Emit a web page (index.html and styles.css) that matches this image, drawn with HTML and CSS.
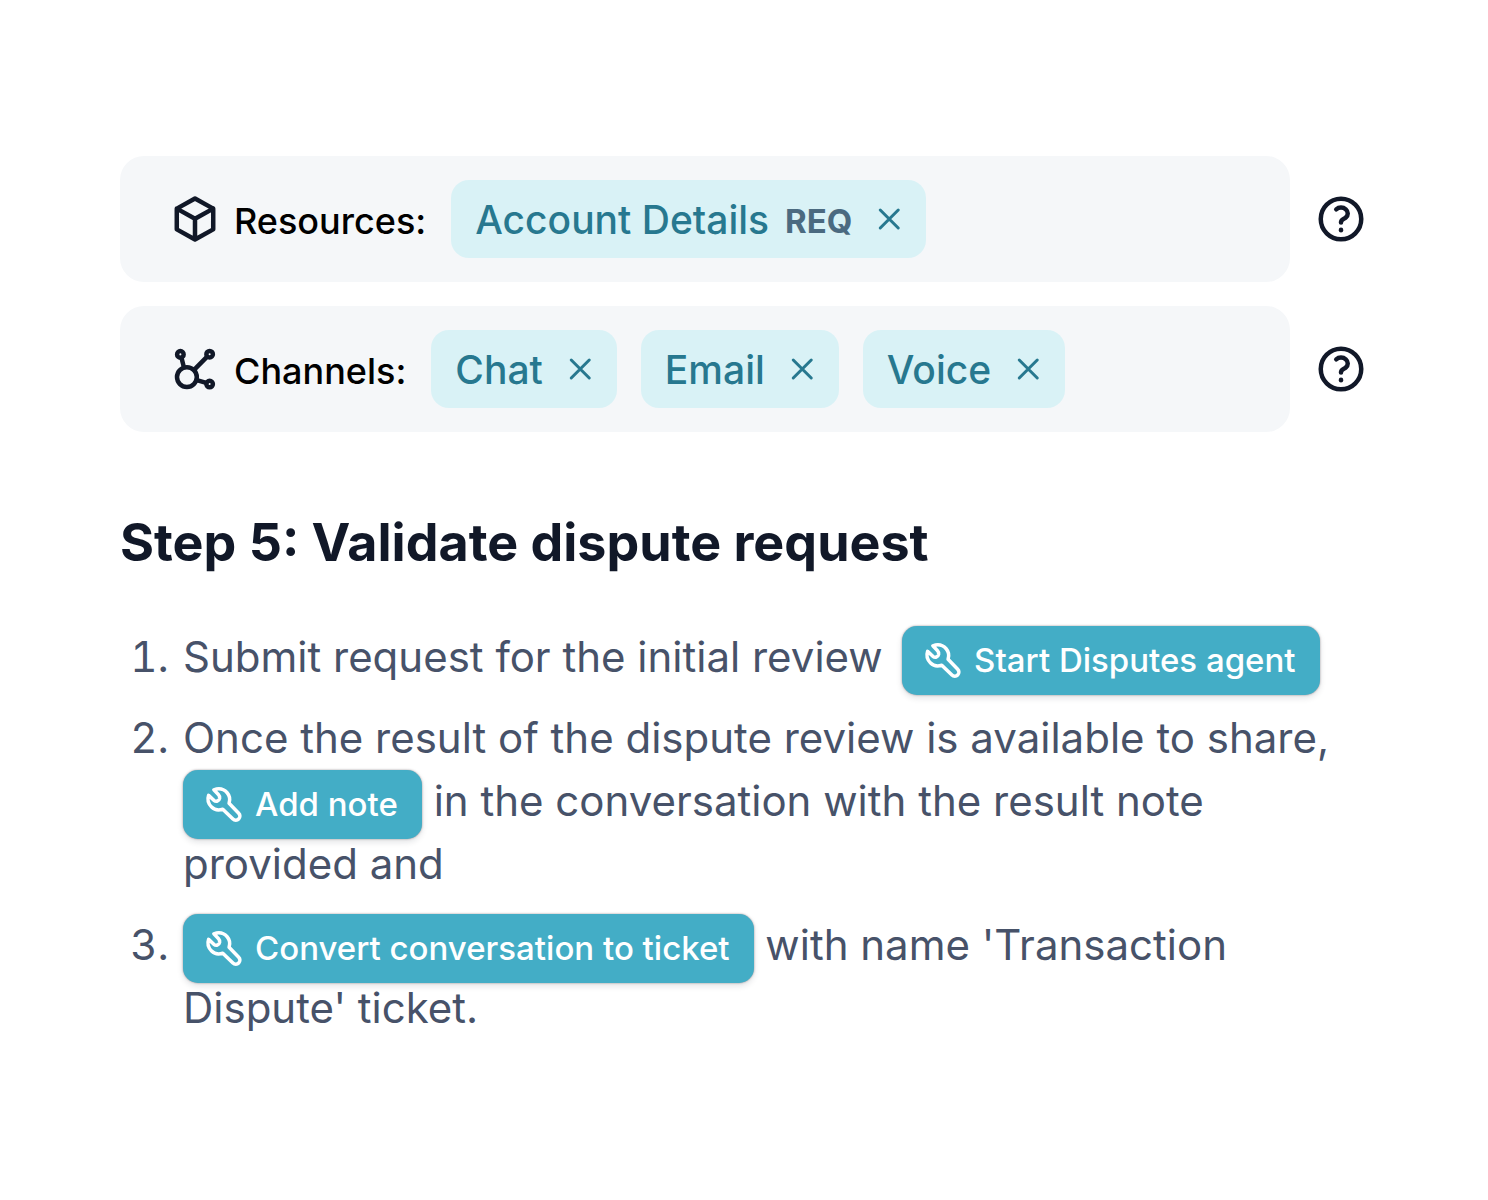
FILE: index.html
```html
<!DOCTYPE html>
<html lang="en">
<head>
<meta charset="utf-8">
<meta name="viewport" content="width=device-width, initial-scale=1">
<title>Validate dispute request</title>
<link rel="stylesheet" href="styles.css">
</head>
<body>
<svg class="sprite" aria-hidden="true">
  <symbol id="close" viewBox="0 0 24 24"><path d="M5.500 6l12 12M17.500 6l-12 12"/></symbol>
  <symbol id="help" viewBox="0 0 24 24"><circle cx="12" cy="12" r="9"/><path d="M9.880 7.700c1.171-1.025 3.071-1.025 4.242 0 1.172 1.025 1.172 2.600 0 3.600-.203.179-.43.326-.67.442-.745.361-1.450.9-1.450 1.750v.1"/><path d="M12 16.800v.2"/></symbol>
  <symbol id="wrench" viewBox="0 0 24 24"><path d="M6.200 3.300C9 2.300 12 3 13.800 5c1.400 1.600 1.800 3.800 1.100 6l5.500 5.700a2.330 2.330 0 0 1-3.300 3.300l-5.800-5.600c-2.400.8-4.700.5-6.400-1.200C3 11.300 2.400 8.900 3.200 6.500l3 2.800c1.300 1 3 .5 3.300-1 .1-.8-.1-1.700-.6-2.200z"/></symbol>
</svg>
<main class="page">
  <section class="fields">
    <div class="field">
      <div class="bar">
        <div class="label">
          <svg class="icon" viewBox="0 0 24 24" aria-hidden="true"><path d="M12 2.900l8.100 4.500v9.200L12 21.100l-8.100-4.500V7.400zM3.900 7.400l8.100 4.500 8.100-4.500M12 11.900v9.200"/></svg>
          <span class="label-text">Resources:</span>
        </div>
        <ul class="chips">
          <li class="chip">Account Details <strong class="req">REQ</strong><button class="remove" aria-label="Remove Account Details"><svg><use href="#close"/></svg></button></li>
        </ul>
      </div>
      <button class="help" aria-label="Help with resources"><svg class="icon"><use href="#help"/></svg></button>
    </div>
    <div class="field">
      <div class="bar">
        <div class="label">
          <svg class="icon" viewBox="0 0 24 24" aria-hidden="true"><circle cx="8.400" cy="15.600" r="4.400"/><circle cx="5.500" cy="5.500" r="1.450"/><circle cx="18.500" cy="5.400" r="1.450"/><circle cx="18.500" cy="18.700" r="1.450"/><path d="M6 7l1 4M17.400 6.500l-5.800 5.900M12.800 16.900l4.200 1.300"/></svg>
          <span class="label-text">Channels:</span>
        </div>
        <ul class="chips">
          <li class="chip">Chat<button class="remove" aria-label="Remove Chat"><svg><use href="#close"/></svg></button></li>
          <li class="chip">Email<button class="remove" aria-label="Remove Email"><svg><use href="#close"/></svg></button></li>
          <li class="chip">Voice<button class="remove" aria-label="Remove Voice"><svg><use href="#close"/></svg></button></li>
        </ul>
      </div>
      <button class="help" aria-label="Help with channels"><svg class="icon"><use href="#help"/></svg></button>
    </div>
  </section>
  <h1 class="title">Step 5: Validate dispute request</h1>
  <ol class="steps">
    <li>Submit request for the initial review&thinsp; <button class="action"><svg><use href="#wrench"/></svg>Start Disputes agent</button></li>
    <li>Once the result of the dispute review is available to share, <button class="action"><svg><use href="#wrench"/></svg>Add note</button> in the conversation with the result note provided and</li>
    <li><button class="action"><svg><use href="#wrench"/></svg>Convert conversation to ticket</button> with name 'Transaction Dispute' ticket.</li>
  </ol>
</main>
</body>
</html>
```
FILE: styles.css
```css
* {
  box-sizing: border-box;
}

body {
  margin: 0;
  background: #fff;
  color: #475269;
  font-family: Inter, "Liberation Sans", sans-serif;
}

button {
  border: 0;
  padding: 0;
  background: none;
  color: inherit;
  font: inherit;
  cursor: pointer;
}

svg {
  fill: none;
  stroke: currentColor;
  stroke-linecap: round;
  stroke-linejoin: round;
}

.sprite {
  display: none;
}

.page {
  padding: 156px 120px;
}

.fields {
  display: flex;
  flex-direction: column;
  gap: 24px;
}

.field {
  display: flex;
  align-items: center;
  gap: 24px;
}

.bar {
  flex: 1;
  display: flex;
  flex-wrap: wrap;
  align-items: center;
  gap: 25px;
  padding: 24px 48px;
  border-radius: 24px;
  background: #f5f7f9;
}

.label {
  display: flex;
  align-items: center;
  gap: 12px;
  color: #000;
  font-size: 36px;
  font-weight: 500;
}

.label-text,
.req {
  padding-top: 4px;
}

.icon {
  display: block;
  width: 54px;
  height: 54px;
  color: #111828;
  stroke-width: 2;
}

.chips {
  display: flex;
  flex-wrap: wrap;
  gap: 24px;
  margin: 0;
  padding: 0;
  list-style: none;
}

.chip {
  display: flex;
  align-items: center;
  gap: 16px;
  height: 78px;
  padding: 0 18px 0 24px;
  border-radius: 18px;
  background: #d9f2f6;
  color: #27788f;
  font-size: 39px;
  font-weight: 500;
}

.req {
  color: #4b6a80;
  font-size: 33px;
  font-weight: 700;
}

.remove {
  margin-left: 4px;
}

.remove svg {
  display: block;
  width: 36px;
  height: 36px;
  stroke-width: 2;
}

.title {
  margin: 78px 0 49px;
  color: #111828;
  font-size: 52px;
  font-weight: 700;
  line-height: 66px;
}

.steps {
  margin: 0;
  padding-left: 60px;
  font-size: 42px;
  line-height: 63px;
}

.steps li {
  padding-left: 3px;
}

.steps li + li {
  margin-top: 18px;
}

.action {
  display: inline-flex;
  align-items: center;
  gap: 10px;
  height: 69px;
  margin: -8px 0;
  padding: 0 24px 0 20px;
  border-radius: 15px;
  background: #43adc6;
  box-shadow: 0 0 2px rgb(60 40 50 / 50%), 0 3px 6px rgb(17 24 40 / 12%);
  color: #fff;
  font-size: 33px;
  font-weight: 500;
  vertical-align: middle;
}

.action svg {
  width: 42px;
  height: 42px;
  stroke-width: 2;
}
```
